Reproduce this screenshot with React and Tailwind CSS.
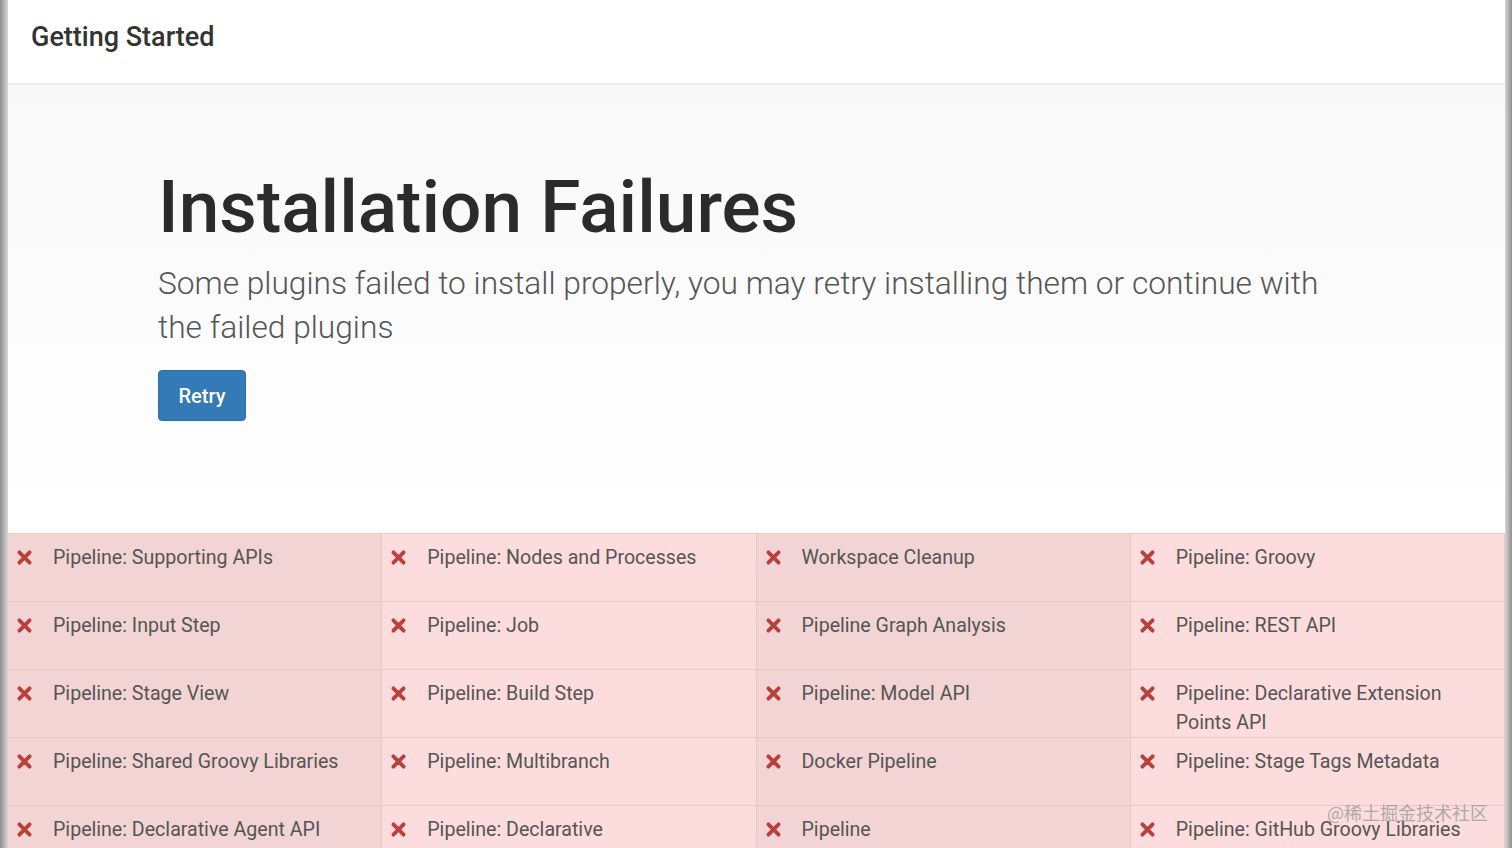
const failed = [
  'Pipeline: Supporting APIs',
  'Pipeline: Nodes and Processes',
  'Workspace Cleanup',
  'Pipeline: Groovy',
  'Pipeline: Input Step',
  'Pipeline: Job',
  'Pipeline Graph Analysis',
  'Pipeline: REST API',
  'Pipeline: Stage View',
  'Pipeline: Build Step',
  'Pipeline: Model API',
  'Pipeline: Declarative Extension Points API',
  'Pipeline: Shared Groovy Libraries',
  'Pipeline: Multibranch',
  'Docker Pipeline',
  'Pipeline: Stage Tags Metadata',
  'Pipeline: Declarative Agent API',
  'Pipeline: Declarative',
  'Pipeline',
  'Pipeline: GitHub Groovy Libraries',
]

function Cross() {
  return (
    <svg viewBox="0 0 16 16" className="w-[17px] h-[17px]">
      <path d="M3.2 3.2 L12.8 12.8 M12.8 3.2 L3.2 12.8" stroke="#b8403d" strokeWidth="3.6" strokeLinecap="round" fill="none" />
    </svg>
  )
}

function FailedPlugin({ name, index }) {
  // odd columns render a bit darker in the wizard
  const dark = index % 2 === 0
  return (
    <div
      className={
        'flex items-start h-[68px] border-r border-b border-[#e8c6c6] pt-[9px] pr-[20px] ' +
        (dark ? 'bg-[#f2d4d4]' : 'bg-[#fcdcdc]')
      }
    >
      <div className="w-[45px] shrink-0 flex pl-[8px] pt-[6px]">
        <Cross />
      </div>
      <span className="text-[19.6px] leading-[29px] text-[#555]">{name}</span>
    </div>
  )
}

export default function App() {
  return (
    <div
      className="relative flex h-screen w-full overflow-hidden bg-white"
      style={{ fontFamily: 'Roboto, "Noto Sans", "Liberation Sans", sans-serif' }}
    >
      <div className="w-[8px] shrink-0 bg-gradient-to-r from-[#8f8f8f] to-[#d6d6d6]" />

      <div className="flex-1 flex flex-col min-w-0">
        <header className="h-[85px] shrink-0 flex items-center px-[23px] pb-[9px] bg-white border-b-2 border-[#ececec]">
          <h1 className="text-[27px] font-medium text-[#333]">Getting Started</h1>
        </header>

        <section className="h-[448px] shrink-0 pl-[150px] pt-[80px] bg-gradient-to-b from-[#f8f8f8] to-white">
          <h2 className="text-[73px] leading-[84px] font-medium text-[#2b2b2b]">Installation Failures</h2>
          <p className="mt-[13px] max-w-[1180px] text-[31.7px] leading-[44px] font-light text-[#555]">
            Some plugins failed to install properly, you may retry installing them or continue with the failed plugins
          </p>
          <button className="mt-[20px] w-[88px] h-[51px] rounded-[4px] bg-[#337ab7] border border-[#2e6da4] text-white text-[20px] font-medium">
            Retry
          </button>
        </section>

        <div className="grid grid-cols-4 border-t border-[#e3cccc]">
          {failed.map((name, i) => (
            <FailedPlugin key={name} name={name} index={i % 4} />
          ))}
        </div>
      </div>

      <div className="w-[7px] shrink-0 bg-gradient-to-r from-[#d6d6d6] to-[#8f8f8f]" />

      <div
        className="absolute right-[24px] bottom-[22px] text-[18px] text-[#9a9a9a]/80 pointer-events-none"
        style={{ fontFamily: '"Noto Sans CJK SC", "Noto Sans", sans-serif' }}
      >
        @稀土掘金技术社区
      </div>
    </div>
  )
}
